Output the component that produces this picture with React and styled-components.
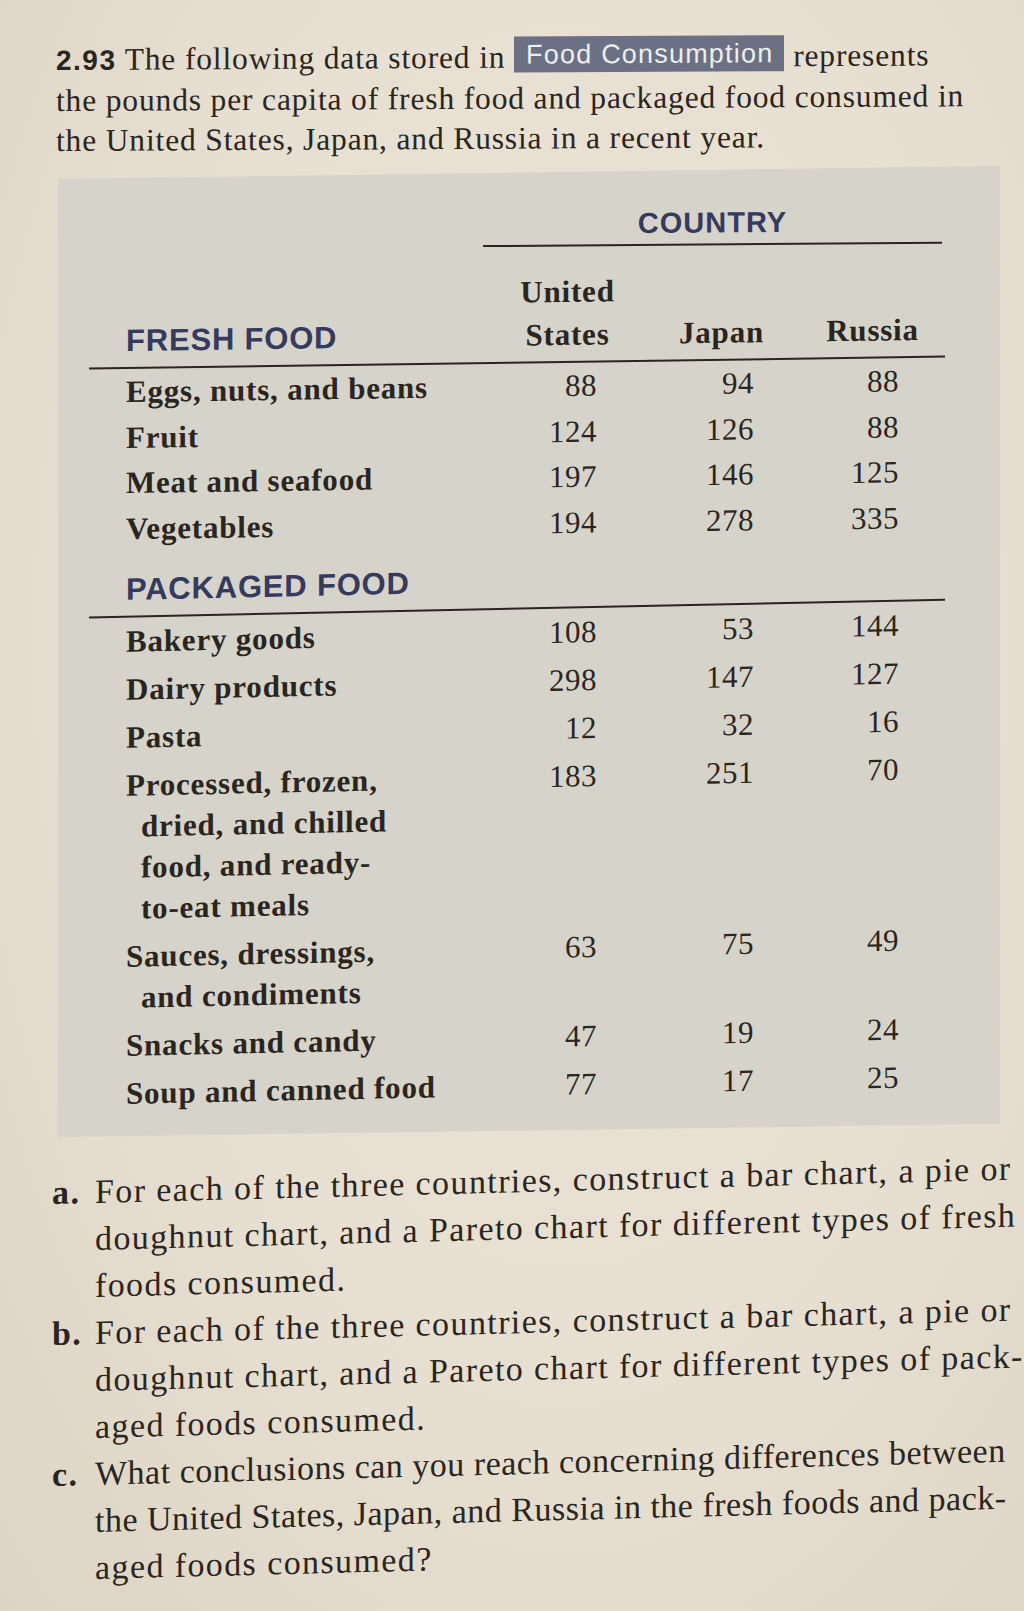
import React from "react";
import styled, { createGlobalStyle, css } from "styled-components";

const SERIF = `"Liberation Serif", "Times New Roman", serif`;
const SANS = `"Liberation Sans", Arial, sans-serif`;
const INK = "#2b2520";
const NAVY = "#353a5e";

const GlobalStyle = createGlobalStyle`
  html, body { margin: 0; padding: 0; background: #e6dfd2; overflow: hidden; }
  #root { width: 1024px; }
`;

const tilt = css`
  transform: skewY(${(p) => -p.$tilt}deg);
  transform-origin: left top;
`;

const Page = styled.main`
  width: 1024px;
  height: 1611px;
  overflow: hidden;
  box-sizing: border-box;
  padding-top: 39px;
  background: radial-gradient(ellipse at 55% 40%, #ebe4d7 0%, #e7dfd1 55%, #ddd4c5 100%);
  color: ${INK};
  font-family: ${SERIF};
`;

const Intro = styled.p`
  margin: 0 0 0 56px;
  font-size: 31.5px;
  line-height: 40px;
  letter-spacing: 0.85px;
  white-space: nowrap;
  ${tilt}
`;

const Line = styled.span`
  display: block;
`;

const ProblemNo = styled.b`
  font-family: ${SANS};
  font-weight: 700;
  font-size: 28px;
  letter-spacing: 1.5px;
`;

const Badge = styled.span`
  display: inline-block;
  background: #6b7183;
  color: #eceef0;
  font-family: ${SANS};
  font-size: 27px;
  letter-spacing: 1.2px;
  line-height: 34px;
  padding: 1px 11px 1px 12px;
  vertical-align: 4px;
`;

const TableCard = styled.section`
  margin: 18px 0 0 58px;
  width: 942px;
  box-sizing: border-box;
  padding: 34px 55px 22px 31px;
  background: #d6d3ca;
  ${tilt}
`;

const CountryHead = styled.div`
  margin-left: 394px;
  width: 459px;
  text-align: center;
  font-family: ${SANS};
  font-weight: 700;
  font-size: 29px;
  letter-spacing: 1px;
  line-height: 34px;
  color: ${NAVY};
  padding-bottom: 4px;
  border-bottom: 2px solid ${INK};
  ${tilt}
`;

const gridCols = css`
  display: grid;
  grid-template-columns: 1fr 125px 131px 119px;
  column-gap: 26px;
  padding-right: 13px;
`;

const SectionHead = styled.div`
  ${gridCols}
  margin-top: ${(p) => p.$top}px;
  padding-bottom: 5px;
  border-bottom: 2px solid ${INK};
  align-items: end;
`;

const SectionTitle = styled.div`
  padding-left: 37px;
  font-family: ${SANS};
  font-weight: 700;
  font-size: 31px;
  letter-spacing: 0.8px;
  line-height: 43px;
  color: ${NAVY};
  white-space: nowrap;
`;

const ColHead = styled.div`
  text-align: center;
  font-weight: 700;
  font-size: 31px;
  letter-spacing: 0.8px;
  line-height: 43px;
`;

const Group = styled.div`
  margin-top: ${(p) => p.$top}px;
  ${tilt}
`;

const RowList = styled.div`
  display: flex;
  flex-direction: column;
  gap: ${(p) => p.$gap}px;
  padding-top: ${(p) => p.$top}px;
`;

const Row = styled.div`
  ${gridCols}
  align-items: start;
`;

const Label = styled.div`
  padding-left: 37px;
  font-weight: 700;
  font-size: 31px;
  letter-spacing: 0.8px;
  line-height: 41px;
  white-space: nowrap;
`;

const LabelLine = styled.span`
  display: block;
  padding-left: ${(p) => (p.$cont ? 15 : 0)}px;
`;

const Num = styled.div`
  text-align: right;
  padding-right: 33px;
  font-size: 31px;
  letter-spacing: 0.5px;
  line-height: 41px;
`;

const Questions = styled.ol`
  list-style: none;
  margin: 32px 0 0 52px;
  padding: 0;
  font-size: 34px;
  line-height: 47px;
  white-space: nowrap;
  ${tilt}
`;

const QItem = styled.li`
  display: grid;
  grid-template-columns: 43px auto;
`;

const QLetter = styled.b`
  font-weight: 700;
  letter-spacing: 1.4px;
`;

const QLine = styled.span`
  display: block;
  letter-spacing: ${(p) => (p.$tight ? 0.5 : 1.4)}px;
`;

const fresh = [
  { name: ["Eggs, nuts, and beans"], v: [88, 94, 88] },
  { name: ["Fruit"], v: [124, 126, 88] },
  { name: ["Meat and seafood"], v: [197, 146, 125] },
  { name: ["Vegetables"], v: [194, 278, 335] },
];

const packaged = [
  { name: ["Bakery goods"], v: [108, 53, 144] },
  { name: ["Dairy products"], v: [298, 147, 127] },
  { name: ["Pasta"], v: [12, 32, 16] },
  {
    name: ["Processed, frozen,", "dried, and chilled", "food, and ready-", "to-eat meals"],
    v: [183, 251, 70],
  },
  { name: ["Sauces, dressings,", "and condiments"], v: [63, 75, 49] },
  { name: ["Snacks and candy"], v: [47, 19, 24] },
  { name: ["Soup and canned food"], v: [77, 17, 25] },
];

const questions = [
  {
    k: "a.",
    lines: [
      ["For each of the three countries, construct a bar chart, a pie or"],
      ["doughnut chart, and a Pareto chart for different types of fresh"],
      ["foods consumed."],
    ],
  },
  {
    k: "b.",
    lines: [
      ["For each of the three countries, construct a bar chart, a pie or"],
      ["doughnut chart, and a Pareto chart for different types of pack-"],
      ["aged foods consumed."],
    ],
  },
  {
    k: "c.",
    lines: [
      ["What conclusions can you reach concerning differences between", true],
      ["the United States, Japan, and Russia in the fresh foods and pack-", true],
      ["aged foods consumed?"],
    ],
  },
];

function DataRows({ rows, top, gap }) {
  return (
    <RowList $top={top} $gap={gap}>
      {rows.map((r) => (
        <Row key={r.name[0]}>
          <Label>
            {r.name.map((n, i) => (
              <LabelLine key={n} $cont={i > 0}>
                {n}
              </LabelLine>
            ))}
          </Label>
          {r.v.map((n, i) => (
            <Num key={i}>{n}</Num>
          ))}
        </Row>
      ))}
    </RowList>
  );
}

export default function App() {
  return (
    <>
      <GlobalStyle />
      <Page>
        <Intro $tilt={0.3}>
          <Line>
            <ProblemNo>2.93</ProblemNo> The following data stored in <Badge>Food Consumption</Badge> represents
          </Line>
          <Line>the pounds per capita of fresh food and packaged food consumed in</Line>
          <Line>the United States, Japan, and Russia in a recent year.</Line>
        </Intro>

        <TableCard $tilt={0.8}>
          <CountryHead $tilt={-0.4}>COUNTRY</CountryHead>
          <SectionHead $top={24}>
            <SectionTitle>FRESH FOOD</SectionTitle>
            <ColHead>
              United
              <br />
              States
            </ColHead>
            <ColHead>Japan</ColHead>
            <ColHead>Russia</ColHead>
          </SectionHead>
          <DataRows rows={fresh} top={2} gap={4.5} />
          <Group $top={19} $tilt={0.4}>
            <SectionHead $top={0}>
              <SectionTitle>PACKAGED FOOD</SectionTitle>
            </SectionHead>
            <DataRows rows={packaged} top={3} gap={7} />
          </Group>
        </TableCard>

        <Questions $tilt={1.45}>
          {questions.map((q) => (
            <QItem key={q.k}>
              <QLetter>{q.k}</QLetter>
              <div>
                {q.lines.map(([l, tight]) => (
                  <QLine key={l} $tight={tight}>
                    {l}
                  </QLine>
                ))}
              </div>
            </QItem>
          ))}
        </Questions>
      </Page>
    </>
  );
}
